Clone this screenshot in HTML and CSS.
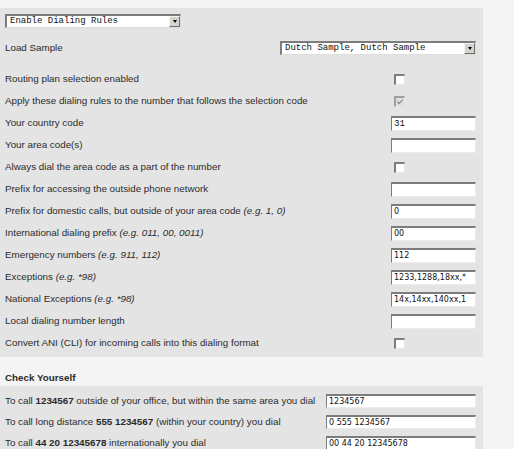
FILE: index.html
```html
<!DOCTYPE html>
<html>
<head>
<meta charset="utf-8">
<link rel="stylesheet" href="styles.css">
</head>
<body>
<div class="panel main">
  <div class="toprow">
    <div class="select sel-enable"><span class="sel-text">Enable Dialing Rules</span><span class="sel-btn"><i class="tri"></i></span></div>
  </div>
  <div class="row sample-row">
    <span class="label">Load Sample</span>
    <div class="select sel-sample"><span class="sel-text">Dutch Sample, Dutch Sample</span><span class="sel-btn"><i class="tri"></i></span></div>
  </div>
  <div class="rows">
    <div class="row"><span class="label">Routing plan selection enabled</span><div class="ctl"><span class="cb"></span></div></div>
    <div class="row"><span class="label">Apply these dialing rules to the number that follows the selection code</span><div class="ctl"><span class="cb checked"><svg viewBox="0 0 9 9" width="9" height="9"><path d="M1.5 3.5 L3.5 5.8 L7.5 1.5 L7.5 3.5 L3.5 7.8 L1.5 5.5 Z" fill="#8a8a8a"/></svg></span></div></div>
    <div class="row"><span class="label">Your country code</span><div class="ctl"><span class="input mono">31</span></div></div>
    <div class="row"><span class="label">Your area code(s)</span><div class="ctl"><span class="input"></span></div></div>
    <div class="row"><span class="label">Always dial the area code as a part of the number</span><div class="ctl"><span class="cb"></span></div></div>
    <div class="row"><span class="label">Prefix for accessing the outside phone network</span><div class="ctl"><span class="input"></span></div></div>
    <div class="row"><span class="label">Prefix for domestic calls, but outside of your area code <em>(e.g. 1, 0)</em></span><div class="ctl"><span class="input">0</span></div></div>
    <div class="row"><span class="label">International dialing prefix <em>(e.g. 011, 00, 0011)</em></span><div class="ctl"><span class="input">00</span></div></div>
    <div class="row"><span class="label">Emergency numbers <em>(e.g. 911, 112)</em></span><div class="ctl"><span class="input">112</span></div></div>
    <div class="row"><span class="label">Exceptions <em>(e.g. *98)</em></span><div class="ctl"><span class="input">1233,1288,18xx,*</span></div></div>
    <div class="row"><span class="label">National Exceptions <em>(e.g. *98)</em></span><div class="ctl"><span class="input">14x,14xx,140xx,1</span></div></div>
    <div class="row"><span class="label">Local dialing number length</span><div class="ctl"><span class="input"></span></div></div>
    <div class="row"><span class="label">Convert ANI (CLI) for incoming calls into this dialing format</span><div class="ctl"><span class="cb"></span></div></div>
  </div>
</div>
<div class="section-title">Check Yourself</div>
<div class="panel check">
  <div class="crow"><span class="label">To call <b>1234567</b> outside of your office, but within the same area you dial</span><span class="input wide">1234567</span></div>
  <div class="crow"><span class="label">To call long distance <b>555 1234567</b> (within your country) you dial</span><span class="input wide">0 555 1234567</span></div>
  <div class="crow"><span class="label">To call <b>44 20 12345678</b> internationally you dial</span><span class="input wide">00 44 20 12345678</span></div>
</div>
</body>
</html>
```

FILE: styles.css
```css
html, body {
  margin: 0;
  padding: 0;
  background: #f4f4f4;
  font-family: "Liberation Sans", Arial, sans-serif;
  font-size: 9.8px;
  color: #2b2b2b;
}

.panel {
  width: 483px;
  background: #e4e4e4;
  box-sizing: border-box;
}

.main {
  margin-top: 8px;
  padding: 6px 7px 3px 0;
}

.toprow {
  height: 14px;
  padding-left: 5px;
  display: flex;
}

.row {
  height: 22px;
  display: flex;
  align-items: center;
  justify-content: space-between;
}

.sample-row {
  margin-top: 9px;
  margin-bottom: 9px;
}

.label {
  padding-left: 5px;
  white-space: nowrap;
  line-height: 12px;
}

.label em {
  font-style: italic;
}

.ctl {
  width: 85px;
  display: flex;
  align-items: center;
}

.select {
  height: 14px;
  box-sizing: border-box;
  background: #fff;
  border-top: 2px solid #7c7c7c;
  border-left: 2px solid #7c7c7c;
  border-right: 1px solid #dcdcdc;
  border-bottom: 1px solid #dcdcdc;
  display: flex;
  align-items: center;
  justify-content: space-between;
  font-family: "Liberation Mono", "Courier New", monospace;
  font-size: 9px;
  color: #111;
}

.sel-enable {
  width: 176px;
}

.sel-sample {
  width: 196px;
}

.sel-text {
  padding-left: 3px;
  line-height: 11px;
  white-space: nowrap;
}

.sel-btn {
  width: 11px;
  height: 11px;
  box-sizing: border-box;
  background: #d6d3cc;
  border-top: 1px solid #f4f4f4;
  border-left: 1px solid #f4f4f4;
  border-right: 1px solid #6e6e6e;
  border-bottom: 1px solid #6e6e6e;
  display: flex;
  align-items: center;
  justify-content: center;
}

.tri {
  width: 0;
  height: 0;
  border-left: 2.5px solid transparent;
  border-right: 2.5px solid transparent;
  border-top: 3px solid #000;
}

.cb {
  margin-left: 3px;
  width: 11px;
  height: 11px;
  box-sizing: border-box;
  background: #fff;
  border-top: 2px solid #7c7c7c;
  border-left: 2px solid #7c7c7c;
  border-right: 1px solid #e6e6e6;
  border-bottom: 1px solid #e6e6e6;
  display: flex;
  align-items: center;
  justify-content: center;
}

.cb.checked {
  background: #dedede;
  border-top-color: #a0a0a0;
  border-left-color: #a0a0a0;
}

.cb svg {
  display: block;
}

.input {
  width: 85px;
  height: 15px;
  box-sizing: border-box;
  background: #fff;
  border-top: 2px solid #7c7c7c;
  border-left: 1px solid #7c7c7c;
  border-right: 1px solid #ececec;
  border-bottom: 1px solid #ececec;
  font-family: "DejaVu Sans", Verdana, sans-serif;
  font-size: 8px;
  line-height: 12px;
  padding-left: 2px;
  color: #111;
  white-space: nowrap;
  overflow: hidden;
  display: block;
}

.input.mono {
  font-family: "Liberation Mono", "Courier New", monospace;
  font-size: 9px;
}

.input.wide {
  width: 150px;
  height: 14px;
  line-height: 11px;
}

.section-title {
  font-weight: bold;
  padding: 15px 0 2px 5px;
  line-height: 12px;
}

.check {
  padding: 4px 7px 4px 0;
}

.crow {
  height: 21px;
  display: flex;
  align-items: center;
  justify-content: space-between;
}
```
